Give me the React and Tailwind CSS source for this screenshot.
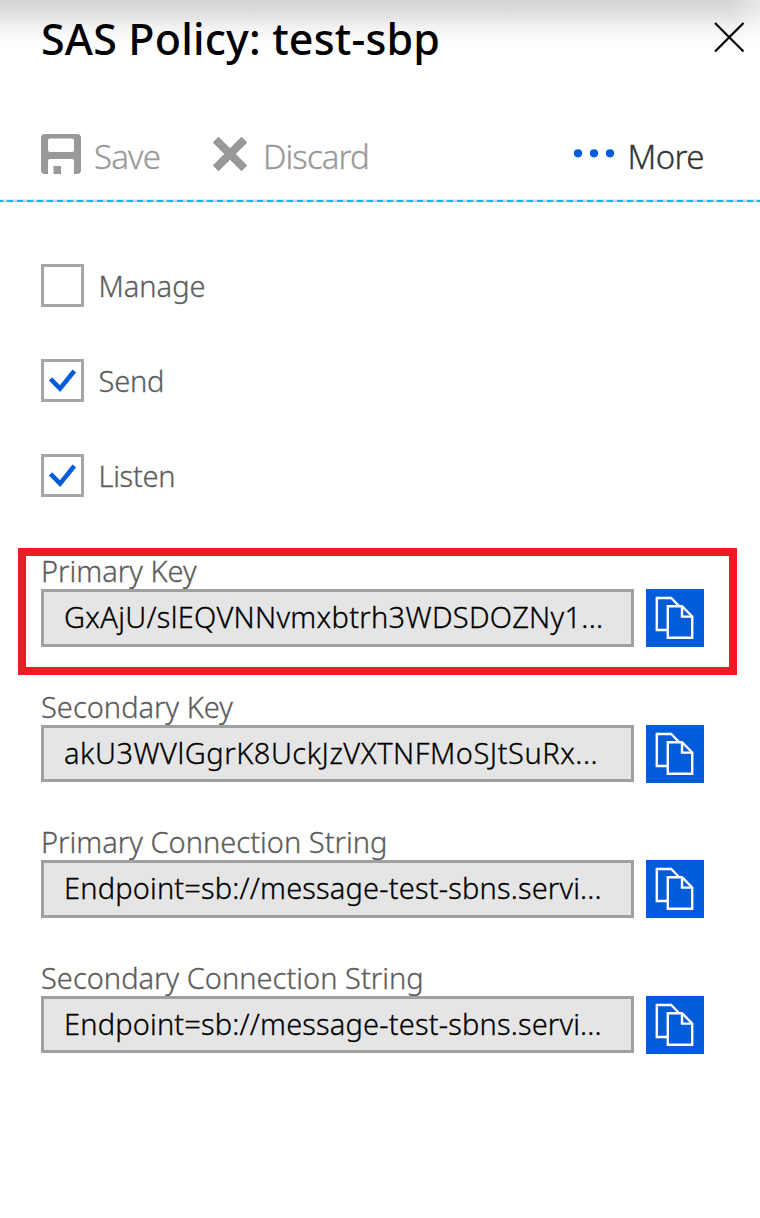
import React from "react";

const fields = [
  { label: "Primary Key", value: "GxAjU/slEQVNNvmxbtrh3WDSDOZNy1...", gap: "mb-[36px]", height: "h-[58px]", valueTrack: "tracking-[0.3px]" },
  { label: "Secondary Key", value: "akU3WVlGgrK8UckJzVXTNFMoSJtSuRx...", gap: "mb-[35px]", height: "h-[57px]", valueTrack: "tracking-[0.53px]" },
  { label: "Primary Connection String", value: "Endpoint=sb://message-test-sbns.servi...", gap: "mb-[36px]", height: "h-[58px]", valueTrack: "tracking-[0.16px]" },
  { label: "Secondary Connection String", value: "Endpoint=sb://message-test-sbns.servi...", gap: "", height: "h-[57px]", valueTrack: "tracking-[0.16px]" },
];

const permissions = [
  { label: "Manage", checked: false, track: "tracking-[0px]" },
  { label: "Send", checked: true, track: "tracking-[-0.2px]" },
  { label: "Listen", checked: true, track: "tracking-[-0.3px]" },
];

function CopyIcon() {
  return (
    <svg width="58" height="58" viewBox="0 0 58 58" fill="none" stroke="#fff" strokeWidth="2.4">
      <path d="M21 41H10.8V9H25.2L33 17" />
      <path d="M21.8 17.2H36L46.2 27.4V48.8H21.8Z" />
      <path d="M36 17.2V27.6H46.2" />
    </svg>
  );
}

function Permission({ label, checked, track }) {
  return (
    <label className="flex h-[43px] items-start">
      <span className="flex size-[43px] items-center justify-center border-3 border-[#a6a6a6] bg-white">
        {checked && (
          <svg width="37" height="37" viewBox="0 0 37 37" fill="none" stroke="#015cda" strokeWidth="4.6">
            <path d="M6.5 16.8L16 26.6L30.3 9" />
          </svg>
        )}
      </span>
      <span className={`ml-[14.5px] text-[29px] leading-[43px] text-[#5c5c5c] ${track}`}>{label}</span>
    </label>
  );
}

function Field({ label, value, gap, height, valueTrack }) {
  return (
    <div className={gap}>
      <div className="h-[42px] text-[29px] leading-[47px] tracking-[0.02px] whitespace-nowrap text-[#5c5c5c]">{label}</div>
      <div className="flex h-[58px] items-start gap-[12px]">
        <div className={`w-[593px] border-3 border-[#a0a0a0] bg-[#e5e5e5] pl-[20px] text-[29px] leading-[49px] whitespace-nowrap text-black ${height} ${valueTrack}`}>
          {value}
        </div>
        <button className="size-[58px] bg-[#015cda]" aria-label="Copy">
          <CopyIcon />
        </button>
      </div>
    </div>
  );
}

export default function App() {
  return (
    <div className="h-[1218px] w-[760px] overflow-hidden bg-white font-['Noto_Sans',sans-serif] font-[350] [-webkit-text-stroke:0.3px]">
      <div className="h-[199px] bg-[linear-gradient(to_right,transparent_730px,rgba(255,255,255,0.45)_760px),linear-gradient(to_bottom,#d6d6d6_0px,#d8d8d8_6px,#e4e4e4_17px,#f3f3f3_28px,#fcfcfc_40px,#ffffff_50px)]">
        <header className="flex h-[136px] items-start justify-between pt-[8px] pr-[15px] pl-[41px]">
          <h1 className="text-[43px] leading-[62px] font-[540] tracking-[0.18px] whitespace-nowrap text-black [-webkit-text-stroke:0px]">SAS Policy: test-sbp</h1>
          <svg className="mt-[14px]" width="32" height="32" viewBox="0 0 32 32" stroke="#000" strokeWidth="2.2">
            <path d="M2 1L30.500 29.500M30.500 1L2 29.500" />
          </svg>
        </header>
        <div className="flex h-[63px] items-start pl-[41px] text-[33px] leading-[42px] text-[#999]">
          <svg className="mt-[-2px]" width="40" height="40" viewBox="0 0 40 40">
            <path fill="#999" fillRule="evenodd" d="M4 0H36Q40 0 40 4V36Q40 40 36 40H33V27Q33 25 31 25H9Q7 25 7 27V40H4Q0 40 0 36V4Q0 0 4 0ZM9 4.500Q7 4.500 7 6.500V16Q7 18 9 18H31Q33 18 33 16V6.500Q33 4.500 31 4.500Z" />
            <path fill="#999" d="M12.500 32H20V40H12.500Z" />
          </svg>
          <span className="ml-[13px] w-[66px] tracking-[-0.85px]">Save</span>
          <svg className="mt-[1px] ml-[53px]" width="34" height="34" viewBox="0 0 34 34" stroke="#999" strokeWidth="8.200">
            <path d="M2.600 2.600L31.400 31.400M31.400 2.600L2.600 31.400" />
          </svg>
          <span className="ml-[16px] w-[110px] tracking-[-0.9px]">Discard</span>
          <svg className="mt-[13px] ml-[200px]" width="42" height="9" viewBox="0 0 42 9" fill="#015cda">
            <circle cx="5" cy="4.300" r="4.100" />
            <circle cx="21" cy="4.300" r="4.100" />
            <circle cx="37" cy="4.300" r="4.100" />
          </svg>
          <span className="ml-[12.5px] tracking-[-0.65px] text-[#333]">More</span>
        </div>
      </div>
      <svg className="block" width="760" height="3">
        <rect width="760" height="1" fill="#ebebeb" />
        <rect y="1" width="760" height="2" fill="#d3d3d3" />
        <path d="M-3 2H760" stroke="#00bcf2" strokeWidth="2" strokeDasharray="6 4" />
      </svg>
      <div className="flex flex-col gap-[52px] pt-[62px] pl-[41px]">
        {permissions.map((p) => (
          <Permission key={p.label} {...p} />
        ))}
      </div>
      <div className="relative pt-[50px] pl-[41px]">
        <div className="pointer-events-none absolute top-[51px] left-[18px] h-[127px] w-[719px] border-8 border-[#ed1c24]" />
        {fields.map((f) => (
          <Field key={f.label} {...f} />
        ))}
      </div>
    </div>
  );
}
